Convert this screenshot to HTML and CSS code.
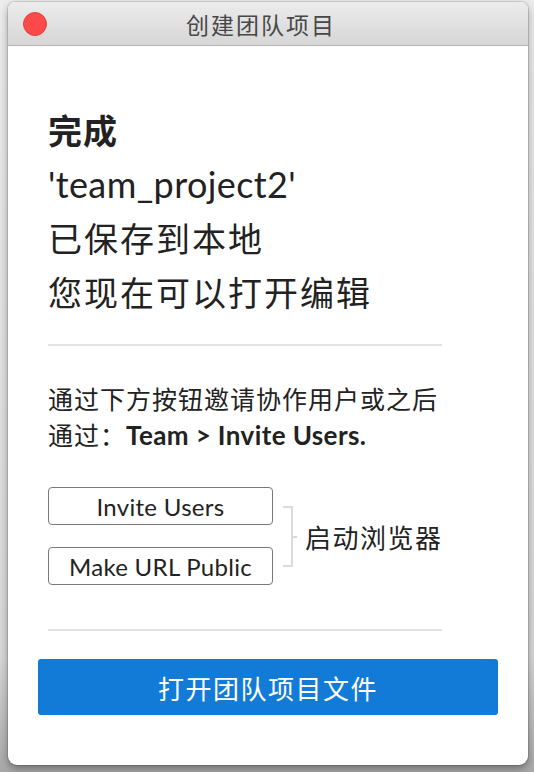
FILE: index.html
```html
<!DOCTYPE html>
<html lang="zh">
<head>
<meta charset="utf-8">
<title>创建团队项目</title>
<link rel="stylesheet" href="styles.css">
</head>
<body>
<div class="window">
  <div class="titlebar">
    <span class="close"></span>
    <span class="title">创建团队项目</span>
  </div>
  <div class="content">
    <div class="headline">
      <div class="done">完成</div>
      <div class="name">'team_project2'</div>
      <div class="line">已保存到本地</div>
      <div class="line">您现在可以打开编辑</div>
    </div>
    <hr class="divider">
    <p class="info">通过下方按钮邀请协作用户或之后<br>通过：<b>Team &gt; Invite Users.</b></p>
    <div class="actions">
      <div class="btns">
        <button class="btn">Invite Users</button>
        <button class="btn">Make URL Public</button>
      </div>
      <span class="bracket"></span>
      <span class="note">启动浏览器</span>
    </div>
    <hr class="divider">
    <button class="primary">打开团队项目文件</button>
  </div>
</div>
</body>
</html>
```

FILE: styles.css
```css
* { box-sizing: border-box; }
html, body { margin: 0; padding: 0; }
body {
  width: 534px;
  height: 772px;
  background: linear-gradient(#ececec, #d8d8d8 85%, #a8a8a8);
  font-family: Lato, "Noto Sans CJK SC", sans-serif;
  color: #222;
  overflow: hidden;
}
.window {
  margin: 2px 0 0 8px;
  width: 520px;
  height: 763px;
  background: #fff;
  border-radius: 7px 7px 9px 9px;
  overflow: hidden;
  box-shadow: 0 0 0 1px rgba(0,0,0,0.12), 0 4px 8px rgba(0,0,0,0.35);
  display: flex;
  flex-direction: column;
}
.titlebar {
  height: 44px;
  background: linear-gradient(#ececec, #d6d6d6);
  border-bottom: 1px solid #b4b4b4;
  display: flex;
  align-items: center;
  justify-content: center;
  position: relative;
}
.close {
  position: absolute;
  left: 15px;
  top: 10px;
  width: 24px;
  height: 24px;
  border-radius: 50%;
  background: #fc4a4a;
  border: 1px solid #e0403e;
}
.title {
  font-family: "Noto Sans CJK SC", sans-serif;
  font-size: 23px;
  color: #474747;
  letter-spacing: 2px;
  margin: 1px 14px 0 0;
}
.content {
  padding: 57px 30px 0 30px;
  display: flex;
  flex-direction: column;
}
.headline {
  padding-left: 10px;
  font-size: 34px;
  line-height: 54px;
  color: #222;
}
.line {
  font-family: "Noto Sans CJK SC", sans-serif;
  letter-spacing: 2px;
}
.name {
  font-family: Lato, sans-serif;
  font-size: 36px;
  letter-spacing: 0.4px;
}
.done {
  font-family: "Noto Sans CJK SC", sans-serif;
  font-weight: bold;
  font-size: 34px;
  letter-spacing: 1px;
}
.divider {
  margin: 25px 0 0 10px;
  width: 394px;
  border: 0;
  height: 2px;
  background: #e2e2e2;
}
.info {
  margin: 34px 0 0 10px;
  font-family: "Noto Sans CJK SC", sans-serif;
  font-size: 25px;
  line-height: 36px;
  letter-spacing: 1px;
  color: #222;
}
.info b {
  font-family: Lato, sans-serif;
  font-size: 26px;
  letter-spacing: 0.4px;
}
.actions {
  margin: 34px 0 0 10px;
  display: flex;
  align-items: center;
}
.btns {
  display: flex;
  flex-direction: column;
  gap: 22px;
}
.btn {
  width: 225px;
  height: 38px;
  background: #fff;
  border: 1.5px solid #7a7a7a;
  border-radius: 4px;
  font-family: Lato, sans-serif;
  font-size: 24px;
  letter-spacing: 0.3px;
  color: #222;
  padding: 0;
}
.bracket {
  margin-left: 10px;
  width: 10px;
  height: 61px;
  border: 2px solid #dadada;
  border-left: 0;
  position: relative;
}
.bracket::after {
  content: "";
  position: absolute;
  right: -6px;
  top: 28px;
  width: 4px;
  height: 2px;
  background: #dadada;
}
.note {
  margin-left: 12px;
  font-family: "Noto Sans CJK SC", sans-serif;
  font-size: 26px;
  letter-spacing: 1.5px;
  color: #222;
}
.actions + .divider { margin-top: 44px; }
.primary {
  margin-top: 28px;
  width: 460px;
  height: 56px;
  background: #127bd8;
  border: 0;
  border-radius: 3px;
  color: #fff;
  font-family: "Noto Sans CJK SC", sans-serif;
  font-size: 26px;
  letter-spacing: 1.5px;
  padding: 0;
}
```
